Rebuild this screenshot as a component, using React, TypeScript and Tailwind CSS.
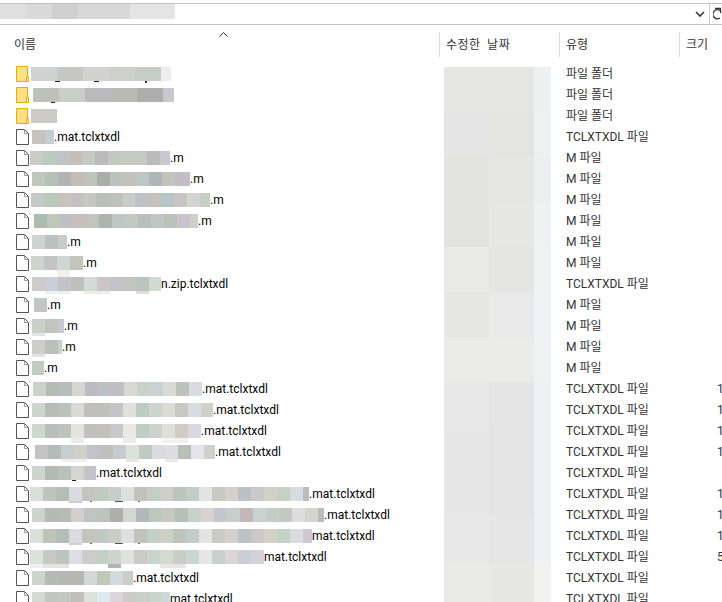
import React from "react";

type Row = {
  x: number; // 모자이크 시작 위치
  blocks: string[];
  w?: number; // 블록 너비
  last?: [string, number]; // 마지막 잘린 블록 (색, 너비)
  under?: [number, number, number, string][]; // 아래쪽 잔상 (x, w, h, 색)
  suffix?: string;
  kind: "folder" | "tcl" | "m";
  size?: string;
};

const rows: Row[] = [
  {
    x: 31,
    w: 26,
    kind: "folder",
    blocks: ["#d1d3d2", "#c6c6c4", "#d2d2cf", "#cdd0cc", "#c6ccc7"],
    last: ["#ecedec", 10],
    under: [
      [24, 5, 1, "#222"],
      [63, 5, 1, "#222"],
      [114, 2, 2, "#333"],
    ],
  },
  {
    x: 33,
    w: 26,
    kind: "folder",
    blocks: ["#bec1ba", "#c8cfc8", "#bababd", "#b9b9b7", "#aeaeae"],
    last: ["#c8c8cd", 11],
    under: [[18, 4, 1, "#222"]],
  },
  { x: 31, w: 26, kind: "folder", blocks: ["#cdcbc9"] },
  {
    x: 32,
    kind: "tcl",
    blocks: ["#c6c2c0"],
    last: ["#c3ced0", 9],
    suffix: ".mat.tclxtxdl",
  },
  {
    x: 30,
    kind: "m",
    blocks: ["#c9cbc6", "#bccbc0", "#c0c3c3", "#c4bfbb", "#c5c9c3", "#b9bbb9", "#c2cabf", "#c6c8c3", "#c5c9c2", "#bcbaba"],
    last: ["#c8c9ce", 10],
    suffix: ".m",
  },
  {
    x: 32,
    kind: "m",
    blocks: ["#bfc8ba", "#b4c2b6", "#b2b3b3", "#c3bcb9", "#bfc3b8", "#a9aeaa", "#bcc3bc", "#c2c2bb", "#bdc7c4", "#b0b5b5", "#c1c4bb"],
    last: ["#c3bec5", 15],
    suffix: ".m",
  },
  {
    x: 31,
    kind: "m",
    blocks: ["#c3cac8", "#b9c8ba", "#c6c3bc", "#c4c0c0", "#c6c7c2", "#b9bebb", "#bcc3bc", "#c8ccc8", "#bcc3c5", "#c4c2ba", "#b6c4c7", "#c9c2c3", "#d5d5d3"],
    last: ["#c3cec4", 10],
    suffix: ".m",
  },
  {
    x: 34,
    kind: "m",
    blocks: ["#adbab0", "#bfc7b9", "#c0bfc4", "#c6bfbd", "#c0c4bc", "#adb4ae", "#bfc6c5", "#c3c8c1", "#b8bfc0", "#c0c6c5", "#bcc2b9", "#c9c3cc"],
    last: ["#cfcec9", 8],
    suffix: ".m",
  },
  {
    x: 32,
    kind: "m",
    blocks: ["#cfd4cf", "#bfc0c1"],
    last: ["#c9cbc8", 9],
    suffix: ".m",
  },
  {
    x: 31,
    kind: "m",
    blocks: ["#ced5d0", "#c3c4c5", "#d0d6d2", "#c2c6ba"],
    under: [[26, 13, 7, "#f0f0ee"]],
    suffix: ".m",
  },
  {
    x: 32,
    kind: "tcl",
    blocks: ["#cfcbc9", "#c9cfd6", "#c3c3c5", "#bdc1bc", "#d5d9d7", "#cbc7c7", "#c3c2c8", "#c0c6bb", "#bac5c1"],
    last: ["#d0d9d4", 12],
    under: [
      [13, 13, 3, "#eeeeee"],
      [26, 13, 3, "#eaf0f0"],
      [52, 26, 3, "#eaeee8"],
      [104, 13, 3, "#dde0dd"],
    ],
    suffix: "n.zip.tclxtxdl",
  },
  { x: 34, kind: "m", blocks: ["#c3c5c5"], suffix: ".m" },
  {
    x: 32,
    kind: "m",
    blocks: ["#ccceca", "#c1c3bd"],
    last: ["#c8c9d0", 6],
    under: [[0, 13, 3, "#e4e4e2"]],
    suffix: ".m",
  },
  {
    x: 32,
    kind: "m",
    blocks: ["#ccceca", "#b9bfb9"],
    last: ["#c8d0c8", 4],
    under: [[0, 13, 3, "#e4e4e2"]],
    suffix: ".m",
  },
  { x: 32, kind: "m", blocks: [], last: ["#c3ccc1", 12], suffix: ".m" },
  {
    x: 33,
    kind: "tcl",
    size: "1",
    blocks: ["#c9d2c8", "#b5bcb3", "#b6bebc", "#d6d6d1", "#bcbbc3", "#bcc2c4", "#c0c0c4", "#d6d8d1", "#c8d2c8", "#c8d2d3", "#dadbd5", "#bfc1bc", "#d9dbdf"],
    suffix: ".mat.tclxtxdl",
  },
  {
    x: 32,
    kind: "tcl",
    size: "1",
    blocks: ["#ccd5ce", "#b6bcb7", "#bac2bb", "#d9d9d7", "#c2bebd", "#bfbfbd", "#c5c5c8", "#e0e0da", "#bdcbc5", "#ced3d2", "#dbdbd5", "#c8c8c3", "#d8dbe0"],
    last: ["#d0cfca", 12],
    suffix: ".mat.tclxtxdl",
  },
  {
    x: 32,
    kind: "tcl",
    size: "1",
    blocks: ["#cdd6cf", "#b8beb9", "#bcc4bc", "#e3e4e0", "#c3bfbf", "#c2c1c0", "#c9c9cc", "#e8e9e2", "#bfcdc6", "#cdd2d1", "#dfdedb", "#cdccc7", "#d9d8df"],
    under: [
      [39, 13, 5, "#ebebed"],
      [91, 13, 5, "#ebebe9"],
      [130, 26, 5, "#f2f0f0"],
    ],
    suffix: ".mat.tclxtxdl",
  },
  {
    x: 35,
    kind: "tcl",
    size: "1",
    blocks: ["#bfc4c3", "#b5bcb5", "#c5cfd0", "#d3cfc9", "#c2c0c8", "#c0c1bd", "#c8cad0", "#dce2da", "#bfcbc0", "#d8dce0", "#dfdce0", "#bbbdb7", "#e3e3e9"],
    last: ["#cfd0cb", 11],
    under: [
      [26, 26, 3, "#eef0f0"],
      [91, 13, 3, "#e6e8e6"],
      [130, 13, 3, "#ece8e8"],
    ],
    suffix: ".mat.tclxtxdl",
  },
  {
    x: 32,
    kind: "tcl",
    blocks: ["#ccd5ce", "#b4bbb6", "#bac0bb", "#d5d5d0"],
    last: ["#c4c2cb", 12],
    under: [[40, 4, 1, "#222"]],
    suffix: ".mat.tclxtxdl",
  },
  {
    x: 30,
    kind: "tcl",
    size: "1",
    blocks: ["#d8ded8", "#bfc4bb", "#b4bdb6", "#dadae0", "#c3c4be", "#c1cac0", "#c9ccc7", "#dfdfdf", "#c2c2bd", "#c2cec6", "#ccd0c6", "#bcc4bc", "#c2cdc9", "#e3e3e3", "#c8c9c6", "#d5d0cc", "#bcc1c6", "#cac8c9", "#d0d2c5", "#c6d1c6", "#d8dce0"],
    last: ["#bbbcbb", 6],
    under: [
      [39, 13, 2, "#ccd0d0"],
      [60, 2, 1, "#666"],
      [85, 8, 1, "#555"],
      [108, 2, 1, "#666"],
    ],
    suffix: ".mat.tclxtxdl",
  },
  {
    x: 32,
    kind: "tcl",
    size: "1",
    blocks: ["#cdd3cd", "#b5bab5", "#b7bbb5", "#d3cfce", "#bdc4c1", "#bbc4bd", "#aeaeaa", "#d4d6d3", "#afb8ba", "#bdc8bc", "#c6c9c1", "#b5c0b7", "#c8d2cc", "#d9d3cf", "#c2c7cf", "#c9cdcd", "#c1b8b7", "#c9d2d3", "#c3ccc5", "#bfcbc0", "#dedcdf", "#d3d3d2"],
    last: ["#bbbbbb", 6],
    suffix: ".mat.tclxtxdl",
  },
  {
    x: 30,
    kind: "tcl",
    size: "1",
    blocks: ["#d8ded8", "#bfc4bb", "#b4bdb6", "#dadae0", "#c3c4be", "#c1cac0", "#c9ccc7", "#dfdfdf", "#c2c2bd", "#c2cec6", "#ccd0c6", "#bcc4bc", "#c2cdc9", "#e3e3e3", "#c8c9c6", "#d5d0cc", "#bcc1c6", "#cac8c9", "#d0d2c5", "#c6d1c6", "#d8dce0"],
    last: ["#cbc8d0", 9],
    under: [
      [39, 13, 2, "#ccd0d0"],
      [60, 2, 1, "#666"],
      [85, 8, 1, "#555"],
      [108, 2, 1, "#666"],
    ],
    suffix: "mat.tclxtxdl",
  },
  {
    x: 30,
    kind: "tcl",
    size: "5",
    blocks: ["#dae2da", "#c6c9c3", "#bcc4c0", "#dddde3", "#ccccc8", "#c4cfc6", "#d0d4cf", "#dfe2df", "#cccac7", "#c8d5cd", "#d5d9d0", "#c8cec5", "#c9d5d3", "#e6e6e4", "#cdcfce", "#dbd6d4", "#cacfd3", "#d3d2d6"],
    under: [
      [0, 13, 4, "#eef2ee"],
      [13, 26, 4, "#e4e4e2"],
      [78, 13, 4, "#b4b4b4"],
      [130, 26, 4, "#e8e6e4"],
    ],
    suffix: "mat.tclxtxdl",
  },
  {
    x: 32,
    kind: "tcl",
    blocks: ["#cdd4cc", "#b5bab5", "#b5b7b5", "#b8b6b1", "#d2d9d4", "#bfc9b9", "#d0d9dc"],
    last: ["#ccccca", 10],
    suffix: ".mat.tclxtxdl",
  },
  {
    x: 32,
    kind: "tcl",
    blocks: ["#d3d9d5", "#c1c6c0", "#c3c8c3", "#c2bfbc", "#dde2de", "#e0e9ed", "#d8d6da", "#cbccc6", "#cccfc8", "#c8d5cd"],
    last: ["#cfd8d8", 8],
    suffix: "mat.tclxtxdl",
  },
];

// 날짜 열 모자이크 (45px 단위)
const dateBlocks = [
  "#e6e6e4", "#e6e6e4", "#edeff1",
  "#e5e5e5", "#e4e4e2", "#eff0f2",
  "#e3e3e1", "#e6e6e4", "#edeef0",
  "#e3e3e1", "#e7e7e5", "#eff0f2",
  "#e9e9e7", "#e5e5e3", "#f0f1f3",
  "#e7e7e5", "#e9e9e9", "#f0f1f3",
  "#ebebe9", "#ebebe9", "#f0f1f3",
  "#e8e8e8", "#e5e5e5", "#eff0f2",
  "#e7e7e7", "#e5e5e5", "#eef0f2",
  "#e7e7e7", "#e5e5e5", "#eef0f2",
  "#e8e8e8", "#e6e6e6", "#eef0f2",
  "#e9e9e7", "#e7e7e5", "#f2f2f2",
];

const typeLabel = { folder: "파일 폴더", tcl: "TCLXTXDL 파일", m: "M 파일" };

function FolderIcon() {
  return (
    <svg width="13" height="16" viewBox="0 0 13 16" className="shrink-0">
      <path d="M.5.5h11v15H.5z" fill="#fee083" stroke="#e4ad0c" />
      <path d="M10.5 10.5h2v5h-2z" fill="#fff3c8" stroke="#e4ad0c" />
    </svg>
  );
}

function FileIcon() {
  return (
    <svg width="13" height="16" viewBox="0 0 13 16" className="shrink-0">
      <path d="M.5.5h8l4 4v11H.5z" fill="#fff" stroke="#555" />
      <path d="M8.5.5v4h4" fill="none" stroke="#999" />
    </svg>
  );
}

function FileRow({ row }: { row: Row }) {
  return (
    <div className="flex h-[21px] items-center">
      <div className="relative flex w-[566px] shrink-0 items-center pl-4">
        {row.kind === "folder" ? <FolderIcon /> : <FileIcon />}
        <div
          className="relative flex h-[14px]"
          style={{ marginLeft: row.x - 29 }}
        >
          {row.blocks.map((c, i) => (
            <div
              key={i}
              className="h-full"
              style={{ background: c, width: row.w ?? 13 }}
            />
          ))}
          {row.last && (
            <div
              className="h-full"
              style={{ background: row.last[0], width: row.last[1] }}
            />
          )}
          {row.under?.map(([x, w, h, c], i) => (
            <div
              key={i}
              className="absolute top-full"
              style={{ left: x, width: w, height: h, background: c }}
            />
          ))}
        </div>
        {row.suffix && <span className="pt-[2px] text-black">{row.suffix}</span>}
      </div>
      <div className="w-[151px] shrink-0 whitespace-nowrap pt-[2px] text-[#333]">
        {typeLabel[row.kind]}
      </div>
      <div className="shrink-0 pt-[2px] text-[#333]">{row.size}</div>
    </div>
  );
}

export default function App() {
  return (
    <div
      className="h-[602px] w-[722px] overflow-hidden bg-white text-[12px] leading-[21px]"
      style={{ fontFamily: 'Roboto, "Noto Sans CJK KR", sans-serif' }}
    >
      {/* 주소 표시줄 */}
      <div className="mt-[3px] flex h-[22px] items-stretch border-y border-[#c0c0c0]">
        <div className="flex h-[15px]">
          <div className="w-[26px] bg-[#e0e0e0]" />
          <div className="w-[26px] bg-[#dadada]" />
          <div className="w-[26px] bg-[#d0d0d0]" />
          <div className="w-[52px] bg-[#d8d8d8]" />
          <div className="w-[45px] bg-[#e4e4e4]" />
        </div>
        <div className="flex flex-1 items-center justify-end">
          <svg width="10" height="6" viewBox="0 0 10 6" className="mr-[4px]">
            <path d="M1 1l4 4 4-4" fill="none" stroke="#333" strokeWidth="1.6" />
          </svg>
          <div className="h-full w-px bg-[#c8c8c8]" />
          <svg width="9" height="14" viewBox="0 0 9 14" className="ml-[3px] shrink-0">
            <path d="M7 3.5A4.5 4.5 0 1 0 7 11" fill="none" stroke="#333" strokeWidth="1.3" />
            <path d="M2 1.5h5.5V6" fill="none" stroke="#333" strokeWidth="1.3" />
          </svg>
        </div>
      </div>

      {/* 컬럼 헤더 */}
      <div className="relative mt-[7px] flex h-[25px] items-center text-[#333]">
        <div className="w-[439px] pl-[14px] pt-[2px]">이름</div>
        <div className="flex h-full w-[120px] items-center border-l border-[#d9d9d9] pl-[6px] pt-[2px] tracking-[0.5px] [word-spacing:3px]">
          수정한 날짜
        </div>
        <div className="flex h-full w-[120px] items-center border-l border-[#d9d9d9] pl-[6px] pt-[2px]">
          유형
        </div>
        <div className="flex h-full flex-1 items-center border-l border-[#d9d9d9] pl-[6px] pt-[2px]">
          크기
        </div>
        <svg width="9" height="5" viewBox="0 0 9 5" className="absolute left-[219px] top-0">
          <path d="M.5 4.5l4-4 4 4" fill="none" stroke="#333" />
        </svg>
      </div>

      {/* 파일 목록 */}
      <div className="relative mt-[6px]">
        {rows.map((row, i) => (
          <FileRow key={i} row={row} />
        ))}
        {/* 날짜 가림 처리 */}
        <div className="absolute left-[444px] top-1 grid grid-cols-[45px_45px_17px] auto-rows-[45px]">
          {dateBlocks.map((c, i) => (
            <div key={i} style={{ background: c }} />
          ))}
        </div>
      </div>
    </div>
  );
}
